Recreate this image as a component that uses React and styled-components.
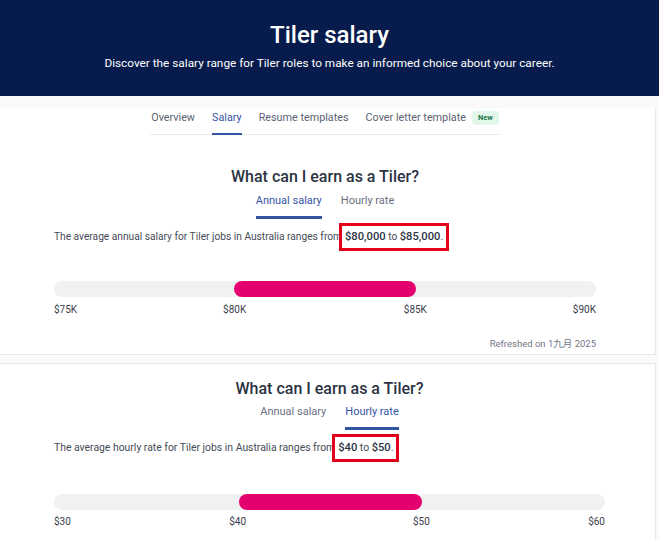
import styled, { createGlobalStyle } from "styled-components";

const GlobalStyle = createGlobalStyle`
  html, body {
    margin: 0;
    padding: 0;
    background: #fafafa;
    font-family: Roboto, "Noto Sans", "Noto Sans CJK SC", sans-serif;
    color: #2e3748;
  }
`;

const salaryCards = [
  {
    key: "annual",
    tab: "annual",
    sentence: "The average annual salary for Tiler jobs in Australia ranges from",
    low: "$80,000",
    high: "$85,000",
    fill: { left: 33.3, width: 33.4 },
    ticks: ["$75K", "$80K", "$85K", "$90K"],
    refreshed: "Refreshed on 1九月 2025",
  },
  {
    key: "hourly",
    tab: "hourly",
    sentence: "The average hourly rate for Tiler jobs in Australia ranges from",
    low: "$40",
    high: "$50",
    fill: { left: 33.5, width: 33.2 },
    ticks: ["$30", "$40", "$50", "$60"],
  },
];

const App = () => {
  return (
    <Page>
      <GlobalStyle />
      <Hero>
        <HeroTitle>Tiler salary</HeroTitle>
        <HeroText>
          Discover the salary range for Tiler roles to make an informed choice
          about your career.
        </HeroText>
      </Hero>

      {salaryCards.map((card, i) => (
        <Card key={card.key} $first={i === 0} $padRight={i === 0 ? 59 : 50}>
          {i === 0 && (
            <PageNav>
              <PageTab>Overview</PageTab>
              <PageTab $active>Salary</PageTab>
              <PageTab>Resume templates</PageTab>
              <PageTab>
                Cover letter template <NewBadge>New</NewBadge>
              </PageTab>
            </PageNav>
          )}
          <Heading $first={i === 0}>What can I earn as a Tiler?</Heading>
          <SubTabs $first={i === 0}>
            <SubTab $active={card.tab === "annual"}>Annual salary</SubTab>
            <SubTab $active={card.tab === "hourly"}>Hourly rate</SubTab>
          </SubTabs>
          <Sentence $first={i === 0}>
            {card.sentence}
            <Highlight>
              <b>{card.low}</b> to <b>{card.high}</b>.
            </Highlight>
          </Sentence>
          <Track $first={i === 0}>
            <Fill
              style={{ left: `${card.fill.left}%`, width: `${card.fill.width}%` }}
            />
          </Track>
          <Scale $first={i === 0}>
            {card.ticks.map((t, j) => (
              <Tick key={t} style={{ left: `${(j * 100) / 3}%` }} $pos={j}>
                {t}
              </Tick>
            ))}
          </Scale>
          {card.refreshed && <Refreshed>{card.refreshed}</Refreshed>}
        </Card>
      ))}
    </Page>
  );
};

export default App;

const Page = styled.div`
  width: 659px;
  height: 540px;
  overflow: hidden;
`;

const Hero = styled.header`
  background: #071b4c;
  height: 96px;
  box-sizing: border-box;
  padding-top: 20px;
  text-align: center;
  color: #fff;
`;

const HeroTitle = styled.h1`
  margin: 0;
  font-size: 24px;
  line-height: 30px;
  font-weight: 500;
`;

const HeroText = styled.p`
  margin: 4px 0 0;
  font-size: 11.8px;
  line-height: 18px;
`;

const Card = styled.section`
  background: #fff;
  margin-right: 3px;
  border-right: 1px solid #e8e8e8;
  border-bottom: ${(p) => (p.$first ? "1px solid #e8e8e8" : "none")};
  border-top: ${(p) => (p.$first ? "none" : "1px solid #e8e8e8")};
  margin-top: ${(p) => (p.$first ? "0" : "8px")};
  padding: ${(p) => (p.$first ? "0" : "13px")} ${(p) => p.$padRight}px
    ${(p) => (p.$first ? "3px" : "40px")} 54px;
`;

const PageNav = styled.nav`
  display: flex;
  gap: 17px;
  width: fit-content;
  margin: 12px auto 0;
  padding: 0 1px;
  border-bottom: 1px solid #ececec;
`;

const PageTab = styled.a`
  display: flex;
  align-items: center;
  gap: 6px;
  font-size: 10.8px;
  line-height: 20px;
  padding-bottom: 5px;
  margin-bottom: -1px;
  color: ${(p) => (p.$active ? "#3454a4" : "#5b6272")};
  border-bottom: 2px solid ${(p) => (p.$active ? "#3454a4" : "transparent")};
`;

const NewBadge = styled.span`
  font-size: 7.5px;
  font-weight: 700;
  line-height: 14px;
  padding: 0 6px;
  border-radius: 4px;
  background: #e2f6ea;
  color: #1f7a4b;
`;

const Heading = styled.h2`
  margin: ${(p) => (p.$first ? "30px" : "0")} 0 0;
  text-align: center;
  font-size: 16px;
  line-height: 24px;
  font-weight: 500;
  color: #2b3343;
`;

const SubTabs = styled.div`
  display: flex;
  justify-content: center;
  gap: 19px;
  margin-top: ${(p) => (p.$first ? "3px" : "2px")};
`;

const SubTab = styled.span`
  font-size: 11px;
  line-height: 18px;
  padding-bottom: 6px;
  color: ${(p) => (p.$active ? "#3454a4" : "#6a7080")};
  border-bottom: 3px solid ${(p) => (p.$active ? "#3454a4" : "transparent")};
`;

const Sentence = styled.p`
  display: flex;
  align-items: center;
  margin: 4px 0 0;
  font-size: ${(p) => (p.$first ? "10.2px" : "10.4px")};
  line-height: 14px;
  color: #454b57;
  white-space: nowrap;
`;

const Highlight = styled.span`
  margin-left: -3px;
  padding: 4px 3px 4px 3px;
  border: 3px solid #e2001a;
  background: #fff;
  color: #454b57;

  b {
    font-weight: 500;
    font-size: 11.2px;
    color: #2b3343;
  }
`;

const Track = styled.div`
  position: relative;
  height: 16px;
  margin-top: ${(p) => (p.$first ? "30px" : "32px")};
  border-radius: 8px;
  background: #f0f1f3;
`;

const Fill = styled.div`
  position: absolute;
  top: 0;
  bottom: 0;
  border-radius: 8px;
  background: #e5006f;
`;

const Scale = styled.div`
  position: relative;
  height: 14px;
  margin-top: ${(p) => (p.$first ? "6px" : "5px")};
`;

const Tick = styled.span`
  position: absolute;
  top: 0;
  font-size: 10px;
  line-height: 14px;
  color: #3a404c;
  transform: translateX(
    ${(p) => (p.$pos === 0 ? "0" : p.$pos === 3 ? "-100%" : "-50%")}
  );
`;

const Refreshed = styled.div`
  margin-top: 20px;
  text-align: right;
  font-size: 9.5px;
  line-height: 14px;
  color: #707684;
`;
